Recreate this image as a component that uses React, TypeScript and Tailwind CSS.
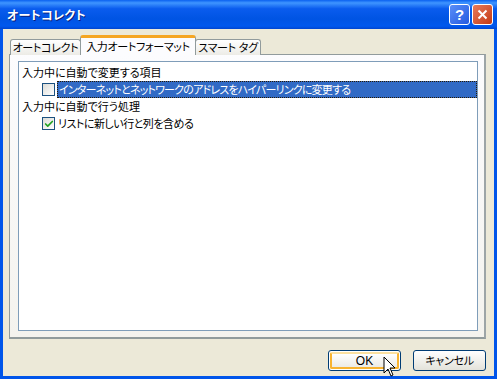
import { Check } from 'lucide-react';

const font = { fontFamily: '"MS UI Gothic", "Noto Sans CJK JP", sans-serif' };

const Checkbox = ({ checked }: { checked?: boolean }) => (
  <div className="w-[13px] h-[13px] border border-[#1C5180] bg-gradient-to-br from-[#DCDCD7] to-[#FFFFFF] flex items-center justify-center shrink-0">
    {checked && <Check size={10} strokeWidth={4} className="text-[#21A121]" />}
  </div>
);

const Cursor = () => (
  <svg width="14" height="22" viewBox="0 0 14 22" className="absolute left-[383px] top-[356px]">
    <path d="M1 1 L1 17 L5 13 L8 20 L10 19 L7 12 L12 12 Z" fill="#fff" stroke="#000" strokeWidth="1" strokeLinejoin="miter" />
  </svg>
);

export default function App() {
  return (
    <div className="relative w-[497px] h-[379px] bg-[#0055EA] flex flex-col [font-feature-settings:'palt'] whitespace-nowrap" style={font}>
      {/* title bar */}
      <div className="h-[29px] shrink-0 flex items-center pl-[7px] pr-[4px] bg-[linear-gradient(to_bottom,#0A61F0_0%,#3F95FF_10%,#0A5CEE_30%,#0054E3_65%,#0058EE_90%,#0045D0_100%)]">
        <span className="text-white font-bold text-[12px] tracking-[0.3px] [text-shadow:1px_1px_0_#0A1E7A] flex-1">オートコレクト</span>
        <div className="flex gap-[2px]">
          <div className="w-[21px] h-[21px] rounded-[3px] border border-white bg-gradient-to-br from-[#5A8EF8] to-[#2459E0] flex items-center justify-center text-white font-bold text-[15px] leading-none" style={{ fontFamily: '"Liberation Sans", sans-serif' }}>?</div>
          <div className="w-[21px] h-[21px] rounded-[3px] border border-white bg-gradient-to-br from-[#E87A5A] to-[#C4380E] flex items-center justify-center">
            <svg width="11" height="11" viewBox="0 0 11 11"><path d="M1.5 1.5 L9.5 9.5 M9.5 1.5 L1.5 9.5" stroke="#fff" strokeWidth="2" /></svg>
          </div>
        </div>
      </div>

      {/* body */}
      <div className="flex-1 mx-[3px] mb-[3px] bg-[#ECE9D8] flex flex-col pl-[6px] pr-[8px] pt-[6px]">
        {/* tabs */}
        <div className="flex items-end h-[20px] pl-[1px] relative z-10 -mb-[1px] text-[11px] tracking-[-0.3px]">
          <div className="h-[16px] w-[71px] border border-b-0 border-[#919B9C] rounded-t-[3px] bg-gradient-to-b from-white to-[#ECEBE6] flex items-center justify-center text-black">オートコレクト</div>
          <div className="h-[20px] w-[116px] -mx-[1px] border-x border-[#919B9C] border-t-[3px] border-t-[#F5A623] rounded-t-[3px] bg-[#FCFCFE] flex items-center justify-center text-black">入力オートフォーマット</div>
          <div className="h-[16px] w-[66px] border border-b-0 border-[#919B9C] rounded-t-[3px] bg-gradient-to-b from-white to-[#ECEBE6] flex items-center justify-center text-black gap-[3px]">
            <span>スマート</span>
            <span>タグ</span>
          </div>
        </div>
        {/* panel */}
        <div className="h-[285px] border border-[#919B9C] border-r-2 border-b-2 border-r-[#9DA5A7] bg-gradient-to-b from-[#FCFCFE] to-[#F4F3EE] pt-[6px] pl-[8px] pr-[6px] pb-[6px] flex">
          <div className="flex-1 border border-[#7F9DB9] bg-white text-[11px] text-black pt-[2px] flex flex-col">
            <div className="h-[17px] flex items-center pl-[3px]">入力中に自動で変更する項目</div>
            <div className="h-[17px] flex items-center pl-[23px] gap-[2px]">
              <Checkbox />
              <div className="flex-1 h-[17px] bg-[#316AC5] text-white flex items-center pl-[1px] border border-dotted border-[#2A1A00] tracking-[-0.8px]">インターネットとネットワークのアドレスをハイパーリンクに変更する</div>
            </div>
            <div className="h-[17px] flex items-center pl-[3px]">入力中に自動で行う処理</div>
            <div className="h-[17px] flex items-center pl-[23px] gap-[3px]">
              <Checkbox checked />
              <span className="tracking-[-0.5px]">リストに新しい行と列を含める</span>
            </div>
          </div>
        </div>
        {/* buttons */}
        <div className="flex justify-end gap-[12px] mt-[11px]">
          <div className="w-[73px] h-[21px] rounded-[3px] border border-[#003C74] p-[1px] bg-white">
            <div className="w-full h-full rounded-[2px] border-2 border-[#F8B330] border-t-[#FCE1A0] bg-gradient-to-b from-white to-[#ECEBE6] flex items-center justify-center text-[12px] text-black" style={{ fontFamily: '"Liberation Sans", sans-serif' }}>OK</div>
          </div>
          <div className="w-[73px] h-[21px] rounded-[3px] border border-[#003C74] bg-gradient-to-b from-white to-[#E3E2DA] flex items-center justify-center text-[11px] tracking-[-0.3px] text-black">キャンセル</div>
        </div>
      </div>
      <Cursor />
    </div>
  );
}
